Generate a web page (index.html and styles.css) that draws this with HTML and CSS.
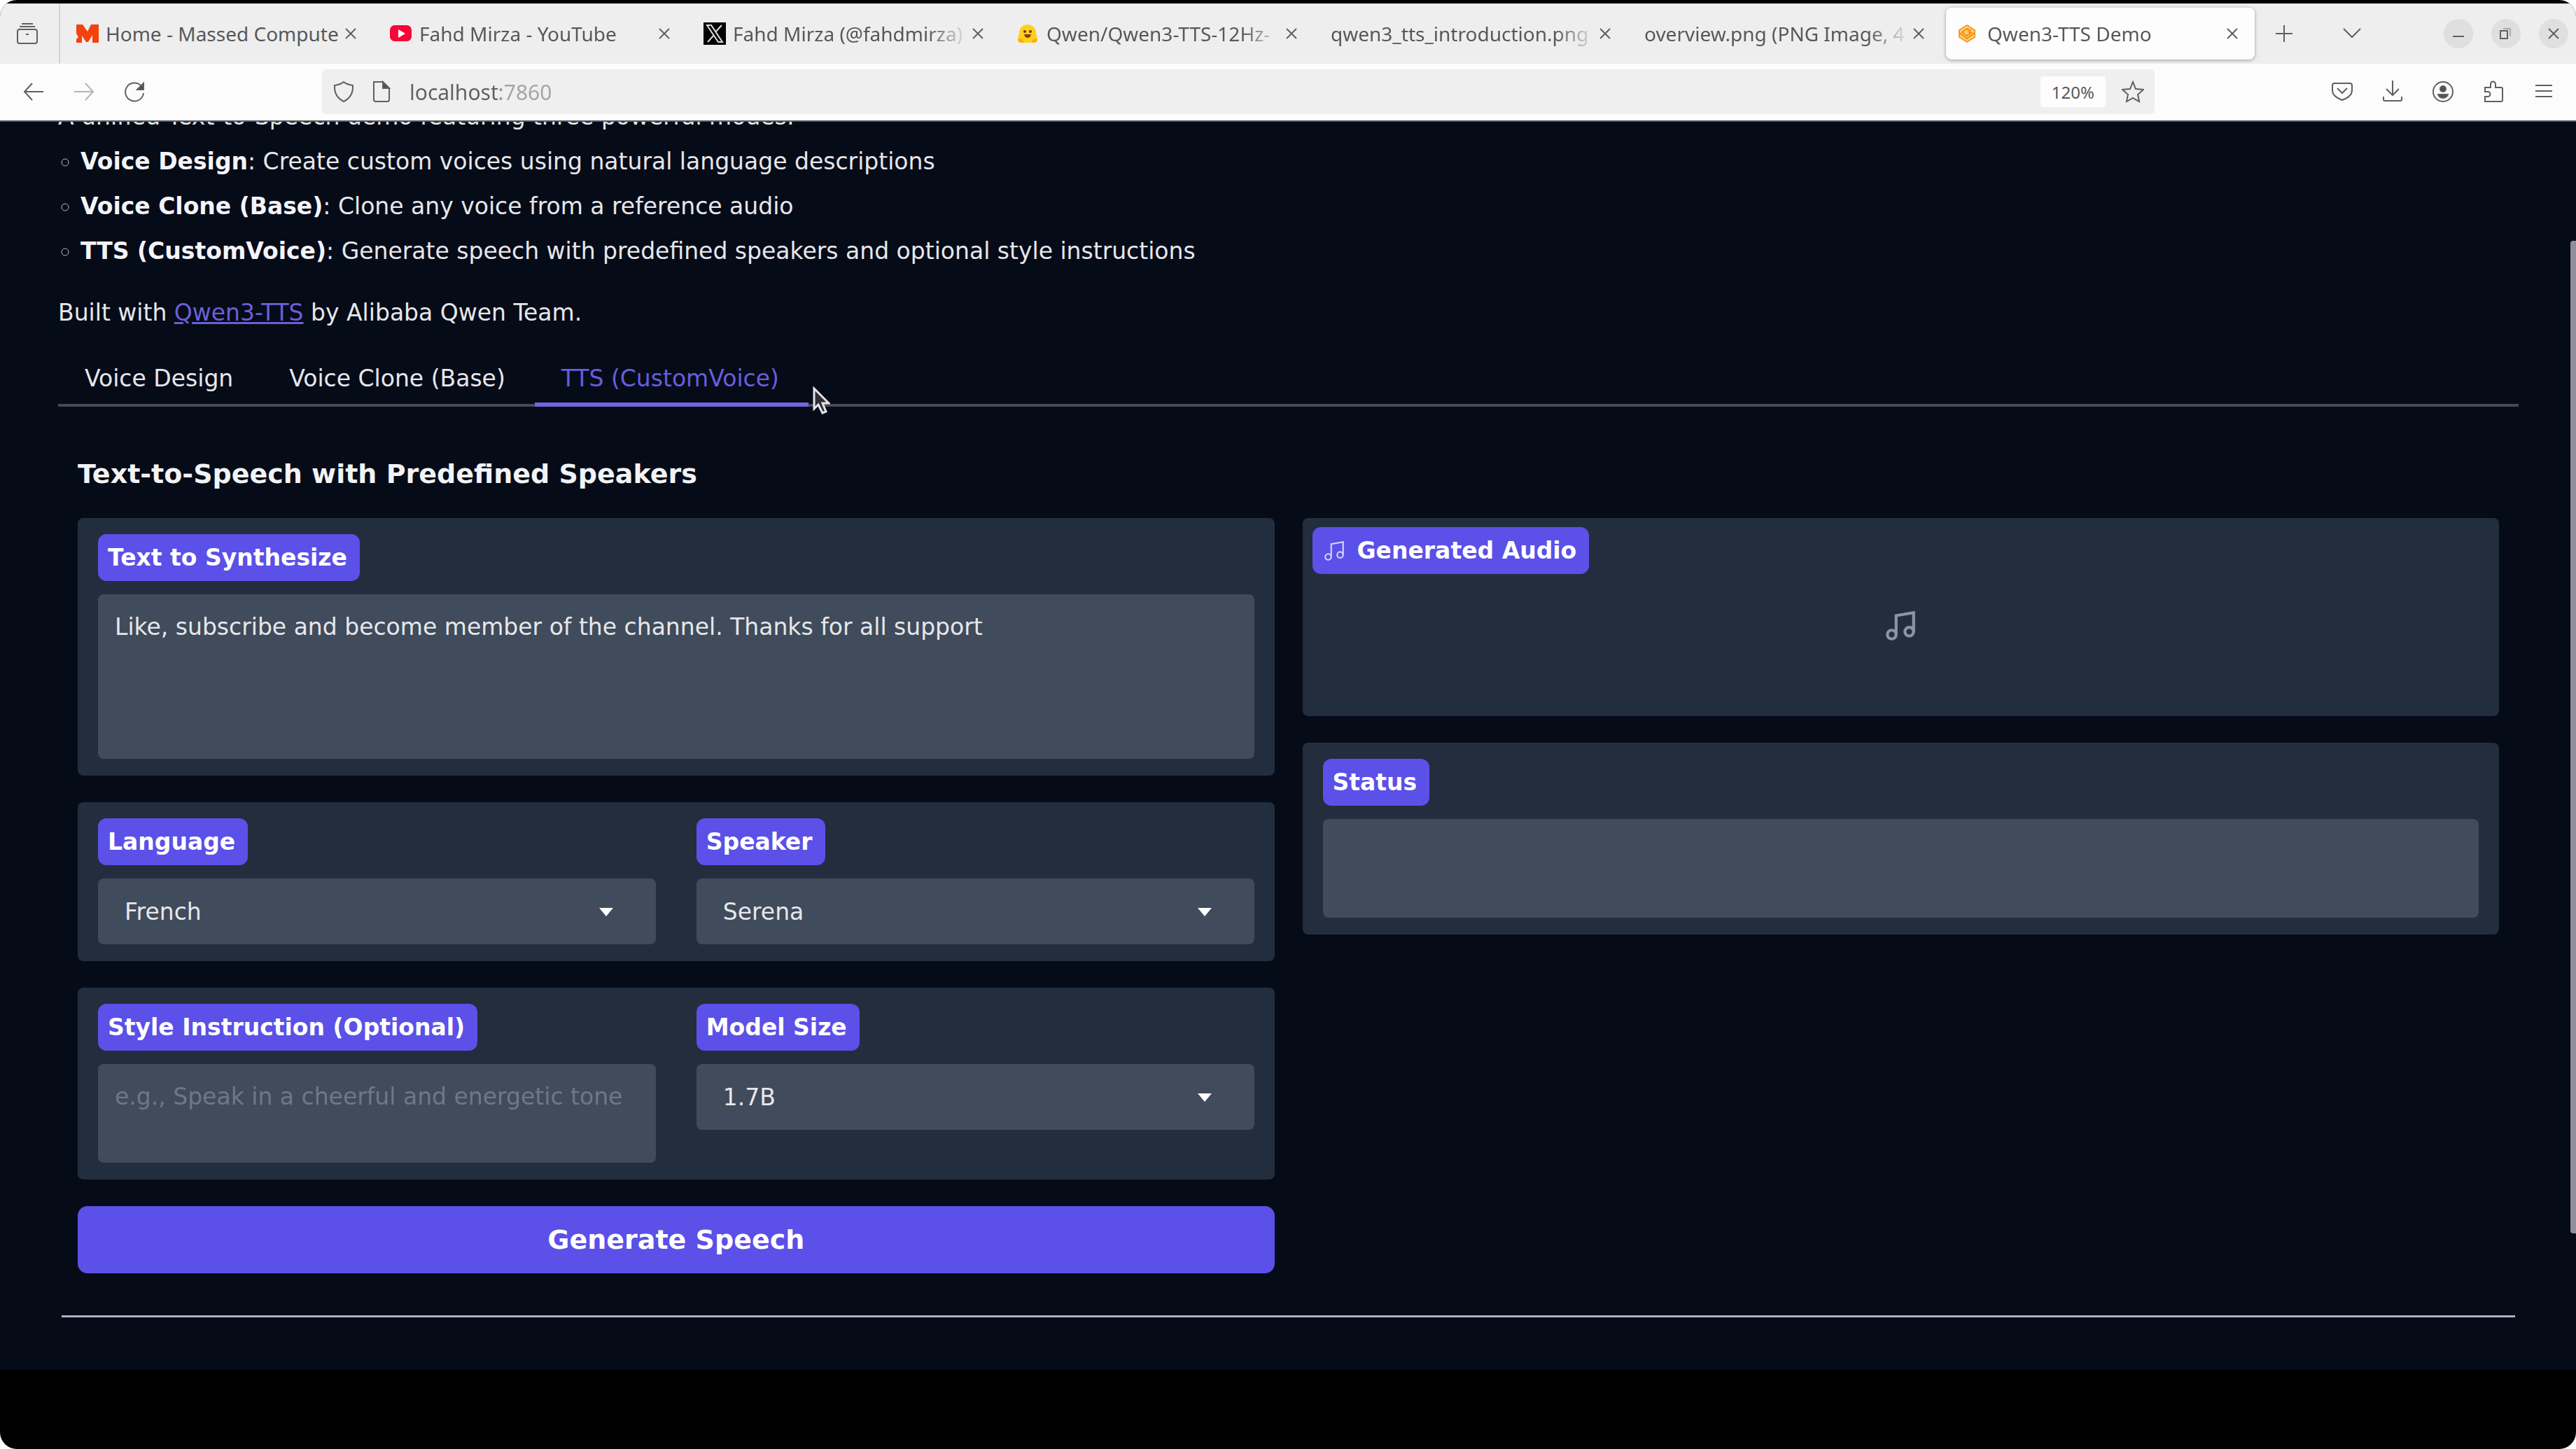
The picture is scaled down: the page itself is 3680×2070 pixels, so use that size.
FILE: index.html
```html
<!DOCTYPE html>
<html lang="en">
<head>
<meta charset="utf-8">
<title>Qwen3-TTS Demo</title>
<link rel="stylesheet" href="styles.css">
</head>
<body>
<svg class="defs" aria-hidden="true">
  <symbol id="close" viewBox="0 0 16 16"><path d="M1 1l14 14M15 1L1 15"/></symbol>
  <symbol id="music" viewBox="0 0 24 24"><path d="M9 18V5l12-2v13"/><circle cx="6" cy="18" r="3"/><circle cx="18" cy="16" r="3"/></symbol>
  <symbol id="caret" viewBox="0 0 20 12"><path d="M0 0h20L10 12z"/></symbol>
</svg>
<div class="screen">
  <header class="chrome">
    <div class="tabstrip">
      <button class="recent" aria-label="Recent browsing">
        <svg class="ico" viewBox="0 0 32 32"><rect x="2" y="10" width="28" height="20" rx="3"/><path d="M5 6h22M8 2h16M14 17h4"/></svg>
      </button>
      <div class="tabs">
        <div class="tab">
          <svg class="fav" viewBox="0 0 32 28"><path fill="#f4420e" d="M0 1h9l7 10 5-10h11v26h-9V16l-6 10h-3L8 17v10H0v-5l3-3-3-5z"/></svg>
          <span class="title">Home - Massed Compute</span>
          <button class="x" aria-label="Close tab"><svg><use href="#close"/></svg></button>
        </div>
        <div class="tab">
          <svg class="fav" viewBox="0 0 32 28"><rect y="2" width="31" height="23" rx="7" fill="#f8063a"/><path fill="#fff" d="M12 8l10 6-10 6z"/></svg>
          <span class="title">Fahd Mirza - YouTube</span>
          <button class="x" aria-label="Close tab"><svg><use href="#close"/></svg></button>
        </div>
        <div class="tab">
          <svg class="fav" viewBox="0 0 32 32"><rect width="32" height="32" fill="#000"/><path fill="none" stroke="#ddd" stroke-width="2" d="M5 4h6l16 24h-6zM26 4l-9 10M6 28l9-10"/></svg>
          <span class="title">Fahd Mirza (@fahdmirza)</span>
          <button class="x" aria-label="Close tab"><svg><use href="#close"/></svg></button>
        </div>
        <div class="tab">
          <svg class="fav" viewBox="0 0 32 30"><path fill="#ffcf1c" d="M3 14a12 12 0 0 1 24 0l2 8q1 6-5 6H6q-6 0-5-6z"/><path fill="#ffac0a" d="M2 22q6-1 8 6H6q-5 0-4-6zM28 22q-6-1-8 6h4q5 0 4-6z"/><circle cx="11" cy="12" r="2" fill="#553c10"/><circle cx="19" cy="12" r="2" fill="#553c10"/><path fill="#8a3b12" d="M10 16h10q-1 5-5 5t-5-5z"/></svg>
          <span class="title">Qwen/Qwen3-TTS-12Hz-</span>
          <button class="x" aria-label="Close tab"><svg><use href="#close"/></svg></button>
        </div>
        <div class="tab">
          <span class="title">qwen3_tts_introduction.png</span>
          <button class="x" aria-label="Close tab"><svg><use href="#close"/></svg></button>
        </div>
        <div class="tab">
          <span class="title">overview.png (PNG Image, 4</span>
          <button class="x" aria-label="Close tab"><svg><use href="#close"/></svg></button>
        </div>
        <div class="tab active">
          <svg class="fav" viewBox="0 0 32 28"><path fill="#ffd27a" stroke="#f79a1c" stroke-width="2" stroke-linejoin="round" d="M2 9l11-7 11 7v10l-11 7-11-7z"/><path fill="none" stroke="#f58a10" stroke-width="2" d="M2 13l11 8 11-8M19 10l-6-3-7 5 7 5 6-4-5-2"/></svg>
          <span class="title">Qwen3-TTS Demo</span>
          <button class="x" aria-label="Close tab"><svg><use href="#close"/></svg></button>
        </div>
      </div>
      <button class="newtab" aria-label="New tab"><svg class="ico" viewBox="0 0 32 32"><path d="M16 4v24M4 16h24"/></svg></button>
      <button class="alltabs" aria-label="List all tabs"><svg class="ico" viewBox="0 0 32 32"><path d="M4 9l12 12L28 9"/></svg></button>
      <div class="winbtns">
        <button aria-label="Minimize"><svg viewBox="0 0 20 20"><path d="M2 14h16"/></svg></button>
        <button aria-label="Restore"><svg viewBox="0 0 20 20"><path d="M2 6h10v11H2z"/><path class="faint" d="M6 3h10v11"/></svg></button>
        <button aria-label="Close window"><svg viewBox="0 0 20 20"><path d="M3 3l14 14M17 3L3 17"/></svg></button>
      </div>
    </div>
    <nav class="toolbar">
      <button aria-label="Back"><svg class="ico" viewBox="0 0 32 32"><path d="M30 16H3M14 4L3 16l11 12"/></svg></button>
      <button aria-label="Forward" disabled><svg class="ico" viewBox="0 0 32 32"><path d="M2 16h27M18 4l11 12-11 12"/></svg></button>
      <button aria-label="Reload"><svg class="ico" viewBox="0 0 32 32"><path d="M29 18a13 13 0 1 1-4-11"/><path class="solid" d="M29 4v9H20z"/></svg></button>
      <div class="urlbar">
        <svg class="ico" viewBox="0 0 32 32"><path d="M16 2q5 4 13 5 1 16-13 23Q2 23 3 7q8-1 13-5z"/></svg>
        <svg class="ico" viewBox="0 0 32 32"><path d="M4 2h13l9 9v16q0 3-3 3H7q-3 0-3-3z"/><path class="solid" d="M17 2v9h9z"/></svg>
        <input class="url" type="text" aria-label="Address" value="localhost:7860">
        <button class="zoomlevel">120%</button>
        <button class="star" aria-label="Bookmark"><svg class="ico" viewBox="0 0 32 32"><path d="M16 2l4 10 11 1-8 7 2 10-9-5-9 5 2-10-8-7 11-1z"/></svg></button>
      </div>
      <button aria-label="Pocket"><svg class="ico" viewBox="0 0 32 32"><path d="M5 4h22q3 0 3 3v7q0 9-14 14Q2 23 2 14V7q0-3 3-3zM9 11l7 7 7-7"/></svg></button>
      <button aria-label="Downloads"><svg class="ico" viewBox="0 0 32 32"><path d="M16 0v21M7 12l9 9 9-9M3 23v4q0 2 2 2h22q2 0 2-2v-4"/></svg></button>
      <button aria-label="Account"><svg class="ico" viewBox="0 0 32 32"><circle cx="16" cy="16" r="14"/><circle class="solid" cx="16" cy="12" r="4"/><path class="solid" d="M9 20h14q-2 5-7 5t-7-5z"/></svg></button>
      <button aria-label="Extensions"><svg class="ico" viewBox="0 0 32 32"><path d="M4 30V23h4a3 3 0 0 0 0-7H4v-6h8V5a3 3 0 0 1 7 0v5h8q2 0 2 2v16q0 2-2 2z"/></svg></button>
      <button aria-label="Menu"><svg class="ico" viewBox="0 0 32 32"><path d="M4 7h24M4 15h24M4 23h24"/></svg></button>
    </nav>
  </header>

  <main class="page">
    <div class="app">
      <div class="intro">
        <p>A unified Text-to-Speech demo featuring three powerful modes:</p>
        <ul>
          <li><strong>Voice Design</strong>: Create custom voices using natural language descriptions</li>
          <li><strong>Voice Clone (Base)</strong>: Clone any voice from a reference audio</li>
          <li><strong>TTS (CustomVoice)</strong>: Generate speech with predefined speakers and optional style instructions</li>
        </ul>
        <p>Built with <a href="#qwen">Qwen3-TTS</a> by Alibaba Qwen Team.</p>
      </div>
      <div class="modes" role="tablist">
        <button role="tab">Voice Design</button>
        <button role="tab">Voice Clone (Base)</button>
        <button role="tab" aria-selected="true">TTS (CustomVoice)
          <svg class="pointer" viewBox="0 0 25 40" aria-hidden="true"><path d="M2 3v29l6-6 6 12 5-2-5-12h9z"/></svg>
        </button>
      </div>
      <section class="panel">
        <h3>Text-to-Speech with Predefined Speakers</h3>
        <div class="columns">
          <div class="column">
            <div class="card field">
              <label class="badge" for="text">Text to Synthesize</label>
              <textarea id="text" rows="4">Like, subscribe and become member of the channel. Thanks for all support</textarea>
            </div>
            <div class="card pair">
              <div class="field">
                <label class="badge" for="lang">Language</label>
                <div class="select"><select id="lang"><option>French</option></select><svg><use href="#caret"/></svg></div>
              </div>
              <div class="field">
                <label class="badge" for="speaker">Speaker</label>
                <div class="select"><select id="speaker"><option>Serena</option></select><svg><use href="#caret"/></svg></div>
              </div>
            </div>
            <div class="card pair">
              <div class="field">
                <label class="badge" for="style">Style Instruction (Optional)</label>
                <textarea id="style" rows="2" placeholder="e.g., Speak in a cheerful and energetic tone"></textarea>
              </div>
              <div class="field">
                <label class="badge" for="size">Model Size</label>
                <div class="select"><select id="size"><option>1.7B</option></select><svg><use href="#caret"/></svg></div>
              </div>
            </div>
            <button class="generate">Generate Speech</button>
          </div>
          <div class="column">
            <div class="card audio">
              <span class="badge"><svg><use href="#music"/></svg>Generated Audio</span>
              <svg class="empty"><use href="#music"/></svg>
            </div>
            <div class="card field">
              <label class="badge" for="status">Status</label>
              <textarea id="status" rows="2" readonly></textarea>
            </div>
          </div>
        </div>
      </section>
      <hr>
    </div>
    <div class="scrollthumb"></div>
  </main>
</div>
</body>
</html>
```
FILE: styles.css
```css
* { box-sizing: border-box; }
body { margin: 0; background: #fff; }
button, input, select, textarea { font: inherit; color: inherit; border: 0; background: none; margin: 0; padding: 0; }
.defs { position: absolute; width: 0; height: 0; }

.screen {
  min-height: 100vh;
  padding-top: 5px;
  background: #000;
  border-radius: 24px;
  overflow: hidden;
}

/* Browser chrome */
.chrome { color: #58585c; font-family: "Noto Sans", sans-serif; font-size: 28px; }
.chrome svg { display: block; fill: none; stroke: #606064; stroke-width: 2; }
.ico { width: 32px; height: 32px; flex: none; }
.chrome .solid { fill: #505054; }
.faint { opacity: .4; }

.tabstrip { display: flex; align-items: center; height: 86px; background: #eee; }
.recent { width: 86px; align-self: stretch; padding-left: 23px; border-right: 2px solid #d4d4d6; }
.tabs { display: flex; gap: 7px; flex: 0 1 3129px; min-width: 0; margin-left: 6px; }
.tab {
  display: flex; align-items: center; gap: 10px;
  flex: 1 1 0; min-width: 0; height: 74px;
  padding: 0 24px 0 17px;
  border-radius: 8px;
}
.tab.active { background: #fdfdfd; box-shadow: 0 1px 5px rgba(0, 0, 0, .35); }
.chrome .fav { width: 32px; height: 32px; flex: none; stroke: none; }
.title {
  flex: 1; min-width: 0; overflow: hidden; white-space: nowrap; line-height: 40px;
  mask-image: linear-gradient(to right, #000 calc(100% - 54px), transparent calc(100% + 6px));
}
.tab:first-child .title { mask-image: none; }
.x { width: 16px; }
.x svg { width: 16px; height: 16px; }
.newtab, .alltabs { flex: none; width: 84px; display: flex; justify-content: center; }
.alltabs { width: 110px; }
.winbtns { display: flex; gap: 26px; margin-left: auto; padding-right: 11px; }
.winbtns button { width: 42px; height: 42px; border-radius: 50%; background: #dfdfdf; display: grid; place-items: center; }
.winbtns svg { width: 20px; height: 20px; stroke-width: 2; }

.toolbar {
  display: flex; align-items: center; padding: 8px 10px 9px 12px;
  background: #fcfcfc; border-bottom: 2px solid #56565c;
}
.toolbar > button { width: 72px; height: 64px; flex: none; display: grid; place-items: center; }
.toolbar > button:disabled { opacity: .45; }
.urlbar {
  display: flex; align-items: center; flex: 1; height: 64px;
  margin: 0 232px; padding: 0 15px; gap: 23px;
  background: #efefef; border-radius: 6px;
}
.url {
  flex: 1; min-width: 0; height: 48px; font-size: 30px; outline: 0;
  color: transparent; background: linear-gradient(to right, #606064 130px, #a4a4a8 130px); background-clip: text;
}
.zoomlevel { height: 44px; padding: 0 16px; border-radius: 4px; background: #fdfdfd; font-size: 24px; }

/* Page */
.page {
  position: relative; overflow: hidden;
  background: #060b18; color: #e6e7ea;
  font: 33px/64px "DejaVu Sans", sans-serif;
}
.app { margin-top: -39px; padding: 0 82px 75px 83px; }
.intro { display: flex; flex-direction: column; }
.intro p, .intro ul { margin: 0; }
.intro ul { padding-left: 32px; list-style: circle; margin-bottom: 24px; }
.intro li::marker { color: #b8bac4; }
.intro strong { color: #f4f4f8; }
.intro a { color: #6a5fd6; }

.modes { display: flex; margin-top: 22px; box-shadow: inset 0 -4px #484853; }
.modes button { height: 80px; padding: 0 42px 0 38px; position: relative; white-space: nowrap; }
.modes [aria-selected] { color: #685ddc; box-shadow: inset 0 -6px #7065de; }
.pointer { position: absolute; left: calc(100% + 6px); top: 51px; width: 25px; height: 40px; fill: #303034; stroke: #e4e4e8; stroke-width: 3; z-index: 1; }

.panel { padding: 64px 28px 60px; }
.panel h3 { margin: 0 0 31px; font-size: 38px; line-height: 64px; color: #f2f3f5; }
.columns { display: grid; grid-template-columns: 1fr 1fr; gap: 40px; align-items: start; }
.column { display: grid; gap: 38px; min-width: 0; }
.card { background: #222e3d; border-radius: 8px; padding: 23px 29px 24px; }
.pair { display: grid; grid-template-columns: 1fr 1fr; gap: 58px; }
.field { display: flex; flex-direction: column; align-items: flex-start; gap: 19px; min-width: 0; }
.badge {
  display: inline-flex; align-items: center; gap: 16px;
  padding: 0 18px 0 14px; border-radius: 12px;
  background: #5b50e8; color: #fff; font-weight: 700; line-height: 67px;
}
.badge svg { width: 34px; height: 34px; fill: none; stroke: #d4d2ff; stroke-width: 1.5; }
textarea, select { display: block; width: 100%; border-radius: 8px; background: #404b5b; line-height: 47px; }
textarea { padding: 23px 24px 24px; resize: none; overflow: hidden; }
textarea::placeholder { color: #6e7887; opacity: 1; }
.select { position: relative; width: 100%; }
.select select { appearance: none; height: 94px; padding: 0 38px; }
.select svg { position: absolute; right: 61px; top: 42px; width: 20px; height: 12px; fill: #fff; pointer-events: none; }
.generate { height: 96px; border-radius: 14px; background: #5b50e8; color: #fff; font-size: 38px; font-weight: 700; }
.audio { padding: 13px 14px 104px; }
.audio .badge { vertical-align: top; }
.empty { display: block; width: 50px; height: 50px; margin: 49px auto 0; fill: none; stroke: #8c95a2; stroke-width: 2; }
hr { height: 3px; margin: 0 5px; border: 0; background: #aeafc2; }
.scrollthumb { position: absolute; right: 0; top: 170px; bottom: 195px; width: 8px; background: #908e9c; border-radius: 4px 0 0 4px; }
```
